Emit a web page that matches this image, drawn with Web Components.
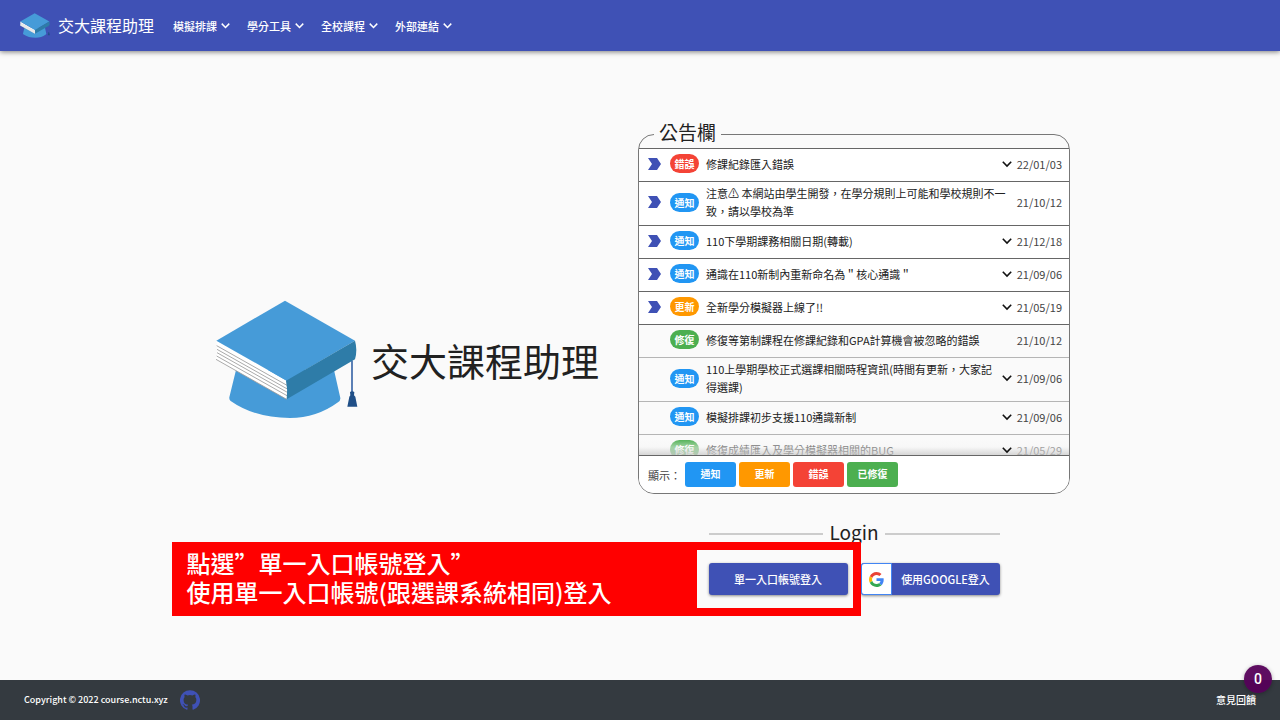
<!DOCTYPE html>
<html lang="zh-Hant">
<head>
<meta charset="utf-8">
<meta name="viewport" content="width=device-width, initial-scale=1">
<title>交大課程助理</title>
<style>
  body {
    margin: 0;
    background: #fafafa;
    color: #212121;
    font: 11px/18px "Noto Sans CJK TC", "Noto Sans", sans-serif;
  }
</style>
</head>
<body>
<course-app></course-app>

<script>
const define = (name, html, init) => {
  const template = document.createElement('template');
  template.innerHTML = html;
  customElements.define(name, class extends HTMLElement {
    constructor() {
      super();
      this.attachShadow({ mode: 'open' }).append(template.content.cloneNode(true));
    }
    connectedCallback() { if (init) init(this, this.shadowRoot); }
  });
};

define('cap-logo', `
  <style>
    :host { display: block; flex: none; }
    svg { display: block; width: 100%; height: auto; }
  </style>
  <svg viewBox="45 30 429 357" aria-hidden="true">
    <path fill="#469bd8" d="M108 240H402L421 324Q422 332 414 337Q350 384 270 384Q165 384 92 333Q87 329 88 322Z"/>
    <path fill="#fff" d="M49 152L260 272Q266 300 260 328L47 208Q54 180 49 152Z"/>
    <path fill="none" stroke="#999" stroke-width="2.5" d="M50 167L261 286M51 178L262 297M51 188L262 307M50 198L261 317M48 208L260 328"/>
    <path fill="#469bd8" d="M49 152L255 32L465 152L260 272Z"/>
    <path fill="#2e7ca8" d="M258 272L465 152Q473 180 465 208L260 328Q264 300 258 272Z"/>
    <path stroke="#3c68a8" stroke-width="5" d="M456 212V306"/>
    <path fill="#204f87" d="M450 306Q456 301 463 306L462 316L466 320L472 350H442L448 320L451 316Z"/>
  </svg>`);

define('chevron-icon', `
  <style>
    :host { display: block; width: 10px; }
    svg { display: block; width: 100%; fill: none; stroke: currentColor; stroke-width: 1.6; }
  </style>
  <svg viewBox="0 0 10 8" aria-hidden="true"><path d="M.8 1.8L5 6L9.2 1.8"/></svg>`);

define('nav-menu', `
  <style>
    :host { display: block; }
    button {
      display: flex; align-items: center; gap: 4px;
      margin: 0; padding: 0; border: 0; background: none;
      color: #fff; font: inherit; font-weight: 500; cursor: pointer;
    }
    chevron-icon { width: 9px; }
  </style>
  <button type="button" aria-haspopup="true"><slot></slot><chevron-icon></chevron-icon></button>`);

define('app-header', `
  <style>
    :host {
      display: flex; align-items: center; box-sizing: border-box; min-height: 51px; padding: 0 20px;
      background: #3f51b5; color: #fff; position: relative;
      box-shadow: 0 1px 5px rgba(0,0,0,.5);
    }
    a { display: flex; align-items: center; gap: 8px; color: inherit; text-decoration: none; font-size: 16px; line-height: 24px; }
    cap-logo { width: 30px; }
    nav { display: flex; gap: 17px; margin-left: 19px; }
  </style>
  <a href="#"><cap-logo></cap-logo>交大課程助理</a>
  <nav>
    <nav-menu>模擬排課</nav-menu>
    <nav-menu>學分工具</nav-menu>
    <nav-menu>全校課程</nav-menu>
    <nav-menu>外部連結</nav-menu>
  </nav>`);

define('hero-brand', `
  <style>
    :host { display: flex; align-items: center; justify-content: center; gap: 13px; padding-top: 4px; }
    cap-logo { width: 143px; }
    h1 { margin: 0; font-size: 38px; line-height: 56px; font-weight: 400; white-space: nowrap; }
  </style>
  <cap-logo></cap-logo><h1>交大課程助理</h1>`);

const KINDS = {
  error: ['錯誤', '#f44336'], notice: ['通知', '#2196f3'],
  update: ['更新', '#ff9800'], fixed: ['修復', '#4caf50']
};

define('notice-row', `
  <style>
    :host {
      display: flex; align-items: center; box-sizing: border-box; min-height: 33px;
      padding: 2px 7px 5px 9px; border-bottom: 1px solid #b5b5b5;
    }
    :host([pinned]) { background: #fff; border-color: #666; }
    .pin { flex: none; width: 22px; }
    .pin svg { display: none; width: 13px; height: 12px; fill: #3f51b5; }
    :host([pinned]) .pin svg { display: block; }
    .tag {
      flex: none; width: 29px; border-radius: 10px; color: #fff; text-align: center;
      font-size: 10px; line-height: 19px; font-weight: 700;
    }
    .text { flex: 1; margin-left: 7px; }
    button {
      flex: none; margin: 0 0 0 3px; padding: 0; border: 0; background: none; color: #111;
      position: relative; z-index: 2; cursor: pointer;
    }
    :host(:not([more])) button { display: none; }
    time { flex: none; margin-left: 5px; color: #444; }
  </style>
  <span class="pin"><svg viewBox="0 0 13 12" aria-hidden="true"><path d="M0 0H9L13 6L9 12H0L4 6Z"/></svg></span>
  <span class="tag"></span>
  <span class="text"><slot></slot></span>
  <button type="button" aria-label="展開"><chevron-icon></chevron-icon></button>
  <time></time>`, (host, root) => {
    const [label, color] = KINDS[host.getAttribute('kind')];
    const tag = root.querySelector('.tag');
    tag.textContent = label;
    tag.style.background = color;
    root.querySelector('time').textContent = host.getAttribute('date');
  });

define('filter-button', `
  <style>
    :host { display: block; width: 51px; }
    button {
      display: block; width: 100%; margin: 0; padding: 0 0 2px; border: 0; border-radius: 3px;
      background: var(--tone); color: #fff; font: inherit; font-size: 10px; line-height: 23px; font-weight: 700; cursor: pointer;
    }
  </style>
  <button type="button" aria-pressed="true"><slot></slot></button>`);

define('notice-board', `
  <style>
    :host { display: block; }
    fieldset { min-width: 0; margin: 0; padding: 0; border: 1px solid #777; border-radius: 16px; }
    legend { margin-left: 15px; padding: 0 5px 4px; font-size: 19px; line-height: 24px; }
    .list { position: relative; height: 306px; overflow: hidden; border: solid #666; border-width: 1px 0; }
    .list::after {
      content: ""; position: absolute; inset: auto 0 0; height: 16px; z-index: 1;
      background: linear-gradient(rgba(245,245,245,0), rgba(245,245,245,.5) 50%, rgba(205,205,205,.8));
    }
    .filters {
      display: flex; align-items: center; gap: 3px; padding: 6px 9px;
      background: #fff; border-radius: 0 0 15px 15px;
    }
    .filters span { width: 34px; white-space: nowrap; color: #444; }
  </style>
  <fieldset>
    <legend>公告欄</legend>
    <div class="list"><slot></slot></div>
    <div class="filters">
      <span>顯示：</span>
      <filter-button style="--tone:#2196f3">通知</filter-button>
      <filter-button style="--tone:#ff9800">更新</filter-button>
      <filter-button style="--tone:#f44336">錯誤</filter-button>
      <filter-button style="--tone:#4caf50">已修復</filter-button>
    </div>
  </fieldset>`);

define('guide-callout', `
  <style>
    :host { display: flex; width: 689px; height: 74px; pointer-events: none; }
    p {
      flex: 1; box-sizing: border-box; margin: 0; padding: 6px 15px; background: #f00; color: #fff;
      font-size: 24px; line-height: 29px; font-weight: 500; white-space: nowrap;
    }
    .frame { flex: none; box-sizing: border-box; width: 164px; border: 8px solid #f00; border-left: 0; }
  </style>
  <p><slot></slot></p><div class="frame"></div>`);

define('login-panel', `
  <style>
    :host { display: block; }
    h2 {
      display: flex; align-items: center; gap: 6px; margin: 0;
      font-size: 19px; line-height: 28px; font-weight: 400;
    }
    h2::before, h2::after { content: ""; flex: 1; height: 2px; margin-top: 3px; background: #ccc; }
    .actions { position: relative; display: grid; grid-template-columns: 1fr 1fr; gap: 13px; margin-top: 17px; }
    button {
      display: flex; align-items: center; justify-content: center; height: 32px; margin: 0; padding: 0;
      border: 0; border-radius: 3px; background: #3f51b5; color: #fff; font: inherit; font-weight: 500;
      box-shadow: 0 1px 3px rgba(0,0,0,.45); cursor: pointer;
    }
    .g {
      display: flex; align-items: center; justify-content: center; box-sizing: border-box;
      width: 31px; height: 32px; border: 1px solid #4285f4; border-radius: 3px 0 0 3px; background: #fff;
    }
    .g svg { width: 15px; height: 15px; }
    .label { flex: 1; }
    guide-callout { position: absolute; top: -21px; right: 139px; }
  </style>
  <h2>Login</h2>
  <div class="actions">
    <button type="button">單一入口帳號登入</button>
    <button type="button">
      <span class="g"><svg viewBox="0 0 48 48" aria-hidden="true">
        <path fill="#ea4335" d="M24 9.5c3.54 0 6.71 1.22 9.21 3.6l6.85-6.85C35.9 2.38 30.47 0 24 0 14.62 0 6.51 5.38 2.56 13.22l7.98 6.19C12.43 13.72 17.74 9.5 24 9.5z"/>
        <path fill="#4285f4" d="M46.98 24.55c0-1.57-.15-3.09-.38-4.55H24v9.02h12.94c-.58 2.96-2.26 5.48-4.78 7.18l7.73 6c4.51-4.18 7.09-10.36 7.09-17.65z"/>
        <path fill="#fbbc05" d="M10.53 28.59c-.48-1.45-.76-2.99-.76-4.59s.27-3.14.76-4.59l-7.98-6.19C.92 16.46 0 20.12 0 24c0 3.88.92 7.54 2.56 10.78l7.97-6.19z"/>
        <path fill="#34a853" d="M24 48c6.48 0 11.93-2.13 15.89-5.81l-7.73-6c-2.15 1.45-4.92 2.3-8.16 2.3-6.26 0-11.57-4.22-13.47-9.91l-7.98 6.19C6.51 42.62 14.62 48 24 48z"/>
      </svg></span>
      <span class="label">使用GOOGLE登入</span>
    </button>
    <guide-callout>點選”單一入口帳號登入”<br>使用單一入口帳號(跟選課系統相同)登入</guide-callout>
  </div>`);

define('app-footer', `
  <style>
    :host {
      position: relative; display: flex; align-items: center; justify-content: space-between;
      box-sizing: border-box; min-height: 40px; padding: 0 24px; background: #343a40; color: #fff;
      font-size: 10px; font-weight: 500;
    }
    .left { display: flex; align-items: center; gap: 12px; font-size: 9px; }
    a { color: #3f51b5; }
    svg { display: block; width: 20px; height: 20px; fill: currentColor; }
    .feedback { color: #fff; text-decoration: none; }
    output {
      position: absolute; right: 8px; top: -15px; width: 28px; height: 28px; border-radius: 50%;
      background: rgba(85,0,88,.95); color: #fff; text-align: center;
      font: 500 14px/28px Roboto, sans-serif; box-shadow: 0 1px 4px rgba(0,0,0,.3);
    }
  </style>
  <div class="left">
    <span>Copyright © 2022 course.nctu.xyz</span>
    <a href="#" aria-label="GitHub"><svg viewBox="0 0 24 24" aria-hidden="true"><path d="M12 .3a12 12 0 0 0-3.8 23.4c.6.1.8-.3.8-.6v-2c-3.3.7-4-1.6-4-1.6-.6-1.4-1.4-1.8-1.4-1.8-1-.7.1-.7.1-.7 1.2 0 1.9 1.2 1.9 1.2 1 1.8 2.8 1.3 3.5 1 0-.8.4-1.3.7-1.6-2.7-.3-5.5-1.3-5.5-6 0-1.2.5-2.3 1.3-3.1-.2-.4-.6-1.6 0-3.2 0 0 1-.3 3.4 1.2a11.5 11.5 0 0 1 6 0c2.3-1.5 3.3-1.2 3.3-1.2.6 1.6.2 2.8 0 3.2.9.8 1.3 1.9 1.3 3.2 0 4.6-2.8 5.6-5.5 5.9.5.4.9 1 .9 2.2v3.3c0 .3.1.7.8.6A12 12 0 0 0 12 .3"/></svg></a>
  </div>
  <a class="feedback" href="#">意見回饋</a>
  <output>0</output>`);

define('course-app', `
  <style>
    :host { display: grid; grid-template-rows: auto 1fr auto; min-height: 100vh; }
    main {
      display: grid; grid-template-columns: minmax(0, 447px) minmax(0, 447px);
      justify-content: center; align-items: center; padding: 0 19px 16px 0;
    }
    .side { width: 432px; max-width: 100%; margin: 0 auto; }
    login-panel { width: 291px; margin: 24px auto 0; }
  </style>
  <app-header></app-header>
  <main>
    <hero-brand></hero-brand>
    <div class="side">
      <notice-board>
        <notice-row pinned more kind="error" date="22/01/03">修課紀錄匯入錯誤</notice-row>
        <notice-row pinned kind="notice" date="21/10/12">注意⚠ 本網站由學生開發，在學分規則上可能和學校規則不一致，請以學校為準</notice-row>
        <notice-row pinned more kind="notice" date="21/12/18">110下學期課務相關日期(轉載)</notice-row>
        <notice-row pinned more kind="notice" date="21/09/06">通識在110新制內重新命名為＂核心通識＂</notice-row>
        <notice-row pinned more kind="update" date="21/05/19">全新學分模擬器上線了!!</notice-row>
        <notice-row kind="fixed" date="21/10/12">修復等第制課程在修課紀錄和GPA計算機會被忽略的錯誤</notice-row>
        <notice-row more kind="notice" date="21/09/06">110上學期學校正式選課相關時程資訊(時間有更新，大家記得選課)</notice-row>
        <notice-row more kind="notice" date="21/09/06">模擬排課初步支援110通識新制</notice-row>
        <notice-row more kind="fixed" date="21/05/29">修復成績匯入及學分模擬器相關的BUG</notice-row>
      </notice-board>
      <login-panel></login-panel>
    </div>
  </main>
  <app-footer></app-footer>`);
</script>
</body>
</html>
